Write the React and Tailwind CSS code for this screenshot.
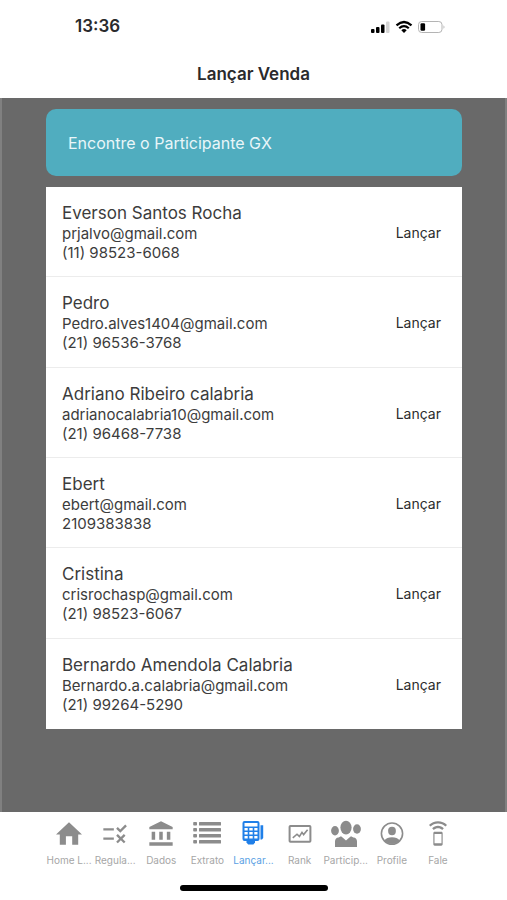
import React from "react";
import { MdRule, MdAccountBalance, MdSpeakerPhone } from "react-icons/md";

const people = [
  { name: "Everson Santos Rocha", email: "prjalvo@gmail.com", phone: "(11) 98523-6068" },
  { name: "Pedro", email: "Pedro.alves1404@gmail.com", phone: "(21) 96536-3768" },
  { name: "Adriano Ribeiro calabria", email: "adrianocalabria10@gmail.com", phone: "(21) 96468-7738" },
  { name: "Ebert", email: "ebert@gmail.com", phone: "2109383838" },
  { name: "Cristina", email: "crisrochasp@gmail.com", phone: "(21) 98523-6067" },
  { name: "Bernardo Amendola Calabria", email: "Bernardo.a.calabria@gmail.com", phone: "(21) 99264-5290" },
];

function Glyph({ children }) {
  return (
    <svg viewBox="0 0 32 28" className="h-7 w-8" fill="currentColor" aria-hidden="true">
      {children}
    </svg>
  );
}

function HomeIcon() {
  return (
    <Glyph>
      <path d="M16 2.3 29 14.6H25.2V24.8H19.2V16.2H12.9V24.8H6.8V14.6H3Z" />
    </Glyph>
  );
}

function ListIcon() {
  return (
    <Glyph>
      {[2, 8, 14, 20].map((y) => (
        <g key={y}>
          <rect x="2.2" y={y} width="3.8" height="3.6" rx="0.8" />
          <rect x="8" y={y} width="22" height="3.6" rx="0.5" />
        </g>
      ))}
    </Glyph>
  );
}

function TerminalIcon() {
  return (
    <Glyph>
      <path
        fillRule="evenodd"
        d="M7.5 1H20.5a2 2 0 0 1 2 2V19a2 2 0 0 1-2 2H7.5a2 2 0 0 1-2-2V3a2 2 0 0 1 2-2ZM7.5 3V6.400H20.5V3ZM7.5 8V10.600H10.700V8ZM12.300 8V10.600H15.700V8ZM17.300 8V10.600H20.500V8ZM7.5 12V14.600H10.700V12ZM12.300 12V14.600H15.700V12ZM17.300 12V14.600H20.500V12ZM7.5 16V18.600H10.700V16ZM12.300 16V18.600H15.700V16ZM17.300 16V18.600H20.500V16Z"
      />
      <path d="M9.500 20.500H18V22.500L16.400 24.400H11.200L9.500 22.600Z" />
      <path d="M23.500 5.200H26.200V18L25 19.600H23.500Z" />
    </Glyph>
  );
}

function ChartIcon() {
  return (
    <Glyph>
      <rect x="5.6" y="6" width="20.8" height="15.8" rx="0.8" fill="none" stroke="currentColor" strokeWidth="2" />
      <path
        d="M8.8 17.8 13 14.2 15.4 16.4 18 12.4 19.6 14.6 23.6 9.8"
        fill="none"
        stroke="currentColor"
        strokeWidth="1.6"
      />
    </Glyph>
  );
}

function GroupIcon() {
  return (
    <Glyph>
      <ellipse cx="16" cy="7.600" rx="5.600" ry="6.800" />
      <ellipse cx="5" cy="10.800" rx="3.900" ry="4.700" />
      <ellipse cx="27" cy="9" rx="3.900" ry="4.700" />
      <path d="M5 27V21.500Q5 17.600 8.600 17.400L11 16.200 12.600 17.600 16 20.600 19.400 17.600 21 16.200 23.400 17.400Q27 17.600 27 21.500V27Z" />
    </Glyph>
  );
}

function ProfileIcon() {
  return (
    <Glyph>
      <circle cx="16" cy="13.600" r="10.600" fill="none" stroke="currentColor" strokeWidth="1.600" />
      <ellipse cx="16" cy="11" rx="3.900" ry="4.200" />
      <path d="M8.400 20.600Q10.800 17.300 16 17.300T23.600 20.600Q20.600 24 16 24T8.400 20.600Z" />
    </Glyph>
  );
}

const tabs = [
  { label: "Home L...", icon: <HomeIcon /> },
  { label: "Regula...", icon: <MdRule size={28} /> },
  { label: "Dados", icon: <MdAccountBalance size={28} /> },
  { label: "Extrato", icon: <ListIcon /> },
  { label: "Lançar...", icon: <TerminalIcon />, active: true },
  { label: "Rank", icon: <ChartIcon /> },
  { label: "Particip...", icon: <GroupIcon /> },
  { label: "Profile", icon: <ProfileIcon /> },
  { label: "Fale", icon: <MdSpeakerPhone size={28} /> },
];

function StatusIcons() {
  return (
    <svg viewBox="0 0 76 14" className="h-[14px] w-[76px]" aria-hidden="true">
      <rect x="1" y="9" width="3.500" height="4" rx="1" />
      <rect x="6" y="7" width="3.500" height="6" rx="1" />
      <rect x="11" y="4.500" width="3.500" height="8.500" rx="1" />
      <rect x="16" y="1.500" width="3.500" height="11.500" rx="1" fill="#d4d4d4" />
      <g fill="none" stroke="#000" strokeWidth="2.200">
        <path d="M26.500 5.400Q34-1.400 41.500 5.400" />
        <path d="M29.200 8.300Q34 4 38.800 8.300" />
      </g>
      <path d="M31.300 10.200Q34 8 36.700 10.200L34 13Z" />
      <rect x="48.500" y="1.500" width="23.500" height="11" rx="3.200" fill="none" stroke="#b4b4b4" />
      <rect x="50.500" y="3.200" width="4.600" height="7.600" rx="1.200" />
      <path d="M73.500 5.200Q75.500 7 73.500 8.800Z" fill="#b4b4b4" />
    </svg>
  );
}

export default function App() {
  return (
    <div className="flex min-h-screen flex-col bg-white font-['Inter','Liberation_Sans',sans-serif] text-[#3c3c3c]">
      <header className="text-[#2a2a2c]">
        <div className="flex h-[54px] items-center justify-between pr-[61px] pl-[75px]">
          <time className="text-[17px] font-semibold">13:36</time>
          <StatusIcons />
        </div>
        <h1 className="h-11 text-center text-[17px] leading-[40px] font-semibold">Lançar Venda</h1>
      </header>

      <main className="flex-1 border-x-2 border-[#808080] bg-[#696969] pt-[11px] pr-[43px] pb-5 pl-11">
        <input
          type="search"
          aria-label="Encontre o Participante GX"
          placeholder="Encontre o Participante GX"
          className="block h-[67px] w-full appearance-none rounded-[10px] bg-[#50adbf] px-[22px] text-base text-white outline-none placeholder:text-[#e9f6f9] placeholder:opacity-100"
        />
        <ul className="mt-[11px] grid min-h-[542px] auto-rows-fr bg-white">
          {people.map((p) => (
            <li
              key={p.email}
              className="flex items-center justify-between border-b border-[#ececec] pt-[6px] pr-[21px] pb-1 pl-4 last:border-white"
            >
              <div>
                <h2 className="text-[17px] leading-[21px]">{p.name}</h2>
                <p className="text-[15px] leading-[19px]">{p.email}</p>
                <p className="text-[15px] leading-[19px]">{p.phone}</p>
              </div>
              <button type="button" className="text-[14px] text-[#2c2c2c]">
                Lançar
              </button>
            </li>
          ))}
        </ul>
      </main>

      <footer className="h-22">
        <nav className="grid grid-cols-9 px-[46px] pt-2">
          {tabs.map((t) => (
            <button
              key={t.label}
              type="button"
              aria-current={t.active ? "page" : undefined}
              className={
                t.active
                  ? "flex flex-col items-center gap-[5px] text-[#1f7fe8]"
                  : "flex flex-col items-center gap-[5px] text-[#8c8c8c]"
              }
            >
              {t.icon}
              <span
                className={
                  t.active
                    ? "text-[10px] leading-[14px] whitespace-nowrap text-[#5a9fe4]"
                    : "text-[10px] leading-[14px] whitespace-nowrap text-[#a6a6a6]"
                }
              >
                {t.label}
              </span>
            </button>
          ))}
        </nav>
        <div className="mx-auto mt-[18px] h-[6px] w-[148px] rounded-full bg-black" />
      </footer>
    </div>
  );
}
